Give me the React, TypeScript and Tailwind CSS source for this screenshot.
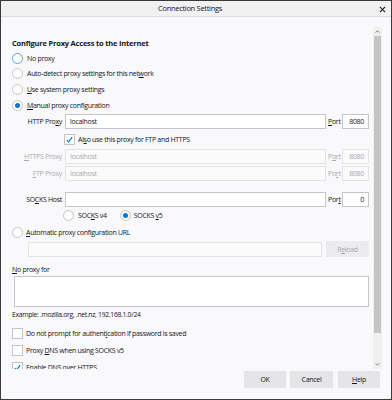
import React from 'react';

function U({ children }: { children: React.ReactNode }) {
	return <span className="underline underline-offset-1">{children}</span>;
}

function Radio({ checked, focus }: { checked?: boolean; focus?: boolean }) {
	return (
		<span
			className={`w-[11px] h-[11px] shrink-0 rounded-full border bg-white flex items-center justify-center ${
				focus ? 'border-[#5b9be0]' : 'border-[#c4c4c8]'
			}`}
		>
			{checked && <span className="w-[5px] h-[5px] rounded-full bg-[#0078d7]" />}
		</span>
	);
}

function Check({ checked }: { checked?: boolean }) {
	return (
		<span className="w-[11px] h-[11px] shrink-0 border border-[#c4c4c8] bg-white flex items-center justify-center">
			{checked && (
				<svg viewBox="0 0 10 10" className="w-[9px] h-[9px]">
					<path d="M2 5.6 L4 7.6 L8 2.4" fill="none" stroke="#0078d7" strokeWidth="1.3" />
				</svg>
			)}
		</span>
	);
}

function Field({ value, disabled, className }: { value?: string; disabled?: boolean; className: string }) {
	return (
		<div
			className={`h-[15px] border px-[4px] flex items-center ${
				disabled ? 'bg-[#fbfbfc] border-[#e3e3e6] text-[#a9a9ad]' : 'bg-white border-[#c6c6ca]'
			} ${className}`}
		>
			{value}
		</div>
	);
}

function ProxyRow({
	label,
	value,
	port,
	portValue,
	disabled,
	className,
}: {
	label: React.ReactNode;
	value?: string;
	port: React.ReactNode;
	portValue: string;
	disabled?: boolean;
	className: string;
}) {
	return (
		<div className={`flex items-center ${className} ${disabled ? 'text-[#a9a9ad]' : ''}`}>
			<div className="w-[51px] text-right pr-[1px]">{label}</div>
			<Field value={value} disabled={disabled} className="ml-[2px] w-[261px]" />
			<div className="w-[16px] pl-[2px]">{port}</div>
			<Field value={portValue} disabled={disabled} className="w-[27px] justify-end" />
		</div>
	);
}

export default function App() {
	return (
		<div className="w-[392px] h-[400px] bg-[#f9f9fb] border border-[#3a3a3a] flex flex-col overflow-hidden text-[#15141a] text-[7px] leading-none tracking-[-0.3px] font-['Open_Sans',sans-serif]">
			{/* title bar */}
			<div className="h-[16px] shrink-0 bg-[#f1f1f2] border-b border-[#dcdcde] flex items-center justify-center pr-[12px] relative">
				<span className="text-[7.5px]">Connection Settings</span>
				<svg viewBox="0 0 8 8" className="absolute right-[5px] top-[5px] w-[7px] h-[7px]">
					<path d="M1 1 L7 7 M7 1 L1 7" stroke="#222" strokeWidth="1.3" />
				</svg>
			</div>

			<div className="h-[352px] shrink-0 flex">
				{/* scroll content */}
				<div className="flex-1 overflow-hidden pl-[11px] pr-[4px] pt-[21px]">
					<div className="h-[12px] flex items-center font-bold text-[7.5px] tracking-[-0.2px]">
						Configure Proxy Access to the Internet
					</div>

					<div className="h-[16px] flex items-center gap-[4px]">
						<Radio focus />
						<span>No proxy</span>
					</div>
					<div className="h-[15px] flex items-center gap-[4px]">
						<Radio />
						<span>
							Auto-detect proxy settings for this net<U>w</U>ork
						</span>
					</div>
					<div className="h-[16px] flex items-center gap-[4px]">
						<Radio />
						<span>
							<U>U</U>se system proxy settings
						</span>
					</div>
					<div className="h-[16px] flex items-center gap-[4px]">
						<Radio checked />
						<span>
							<U>M</U>anual proxy configuration
						</span>
					</div>

					<ProxyRow
						className="h-[17px]"
						label={
							<>
								HTTP Pro<U>x</U>y
							</>
						}
						value="localhost"
						port={
							<>
								<U>P</U>ort
							</>
						}
						portValue="8080"
					/>

					<div className="h-[18px] flex items-center gap-[3px] pl-[52px]">
						<Check checked />
						<span>
							Al<U>s</U>o use this proxy for FTP and HTTPS
						</span>
					</div>

					<ProxyRow
						disabled
						className="h-[17px]"
						label={
							<>
								<U>H</U>TTPS Proxy
							</>
						}
						value="localhost"
						port={
							<>
								P<U>o</U>rt
							</>
						}
						portValue="8080"
					/>
					<ProxyRow
						disabled
						className="h-[17px]"
						label={
							<>
								<U>F</U>TP Proxy
							</>
						}
						value="localhost"
						port={
							<>
								Po<U>r</U>t
							</>
						}
						portValue="8080"
					/>

					<ProxyRow
						className="h-[17px] mt-[9px]"
						label={
							<>
								SO<U>C</U>KS Host
							</>
						}
						port={
							<>
								Por<U>t</U>
							</>
						}
						portValue="0"
					/>

					<div className="h-[15px] flex items-center pl-[51px]">
						<Radio />
						<span className="ml-[4px]">
							SOC<U>K</U>S v4
						</span>
						<span className="ml-[13px]">
							<Radio checked />
						</span>
						<span className="ml-[3px]">
							SOCKS <U>v</U>5
						</span>
					</div>

					<div className="h-[16px] flex items-center gap-[3px] mt-[1px]">
						<Radio />
						<span>
							<U>A</U>utomatic proxy configuration URL
						</span>
					</div>

					<div className="h-[18px] flex items-center">
						<Field disabled className="ml-[16px] w-[294px]" />
						<div className="ml-[4px] w-[43px] h-[16px] bg-[#ececef] text-[#a9a9ad] flex items-center justify-center">
							R<U>e</U>load
						</div>
					</div>

					<div className="h-[14px] flex items-center mt-[4px]">
						<span>
							<U>N</U>o proxy for
						</span>
					</div>
					<div className="ml-[2px] w-[355px] h-[31px] bg-white border border-[#c6c6ca]" />

					<div className="h-[14px] flex items-center mt-[1px] text-[6.8px]">
						Example: .mozilla.org, .net.nz, 192.168.1.0/24
					</div>

					<div className="h-[17px] flex items-center gap-[3px] mt-[3px]">
						<Check />
						<span>
							Do not prompt for authent<U>i</U>cation if password is saved
						</span>
					</div>
					<div className="h-[17px] flex items-center gap-[3px]">
						<Check />
						<span>
							Proxy <U>D</U>NS when using SOCKS v5
						</span>
					</div>
					<div className="h-[17px] flex items-center gap-[3px]">
						<Check checked />
						<span>Enable DNS over HTTPS</span>
					</div>
				</div>

				{/* scrollbar */}
				<div className="w-[9px] mr-[9px] mt-[10px] flex flex-col items-center bg-[#f0f0f0]">
					<div className="h-[8px] flex items-center justify-center">
						<svg viewBox="0 0 6 4" className="w-[5px] h-[3px]">
							<path d="M0.5 3.5 L3 1 L5.5 3.5" fill="none" stroke="#555" strokeWidth="1" />
						</svg>
					</div>
					<div className="w-[7px] h-[297px] bg-[#c4c4c4] mt-[1px]" />
					<div className="flex-1" />
					<div className="h-[10px] flex items-center justify-center">
						<svg viewBox="0 0 6 4" className="w-[5px] h-[3px]">
							<path d="M0.5 0.5 L3 3 L5.5 0.5" fill="none" stroke="#555" strokeWidth="1" />
						</svg>
					</div>
				</div>
			</div>

			{/* footer */}
			<div className="flex-1 flex justify-end items-start gap-[4px] pr-[11px] pt-[2px]">
				<div className="w-[42px] h-[17px] bg-[#e5e5e8] flex items-center justify-center">OK</div>
				<div className="w-[43px] h-[17px] bg-[#e5e5e8] flex items-center justify-center">Cancel</div>
				<div className="w-[42px] h-[17px] bg-[#e5e5e8] flex items-center justify-center ml-[1px]">
					<U>H</U>elp
				</div>
			</div>
		</div>
	);
}
